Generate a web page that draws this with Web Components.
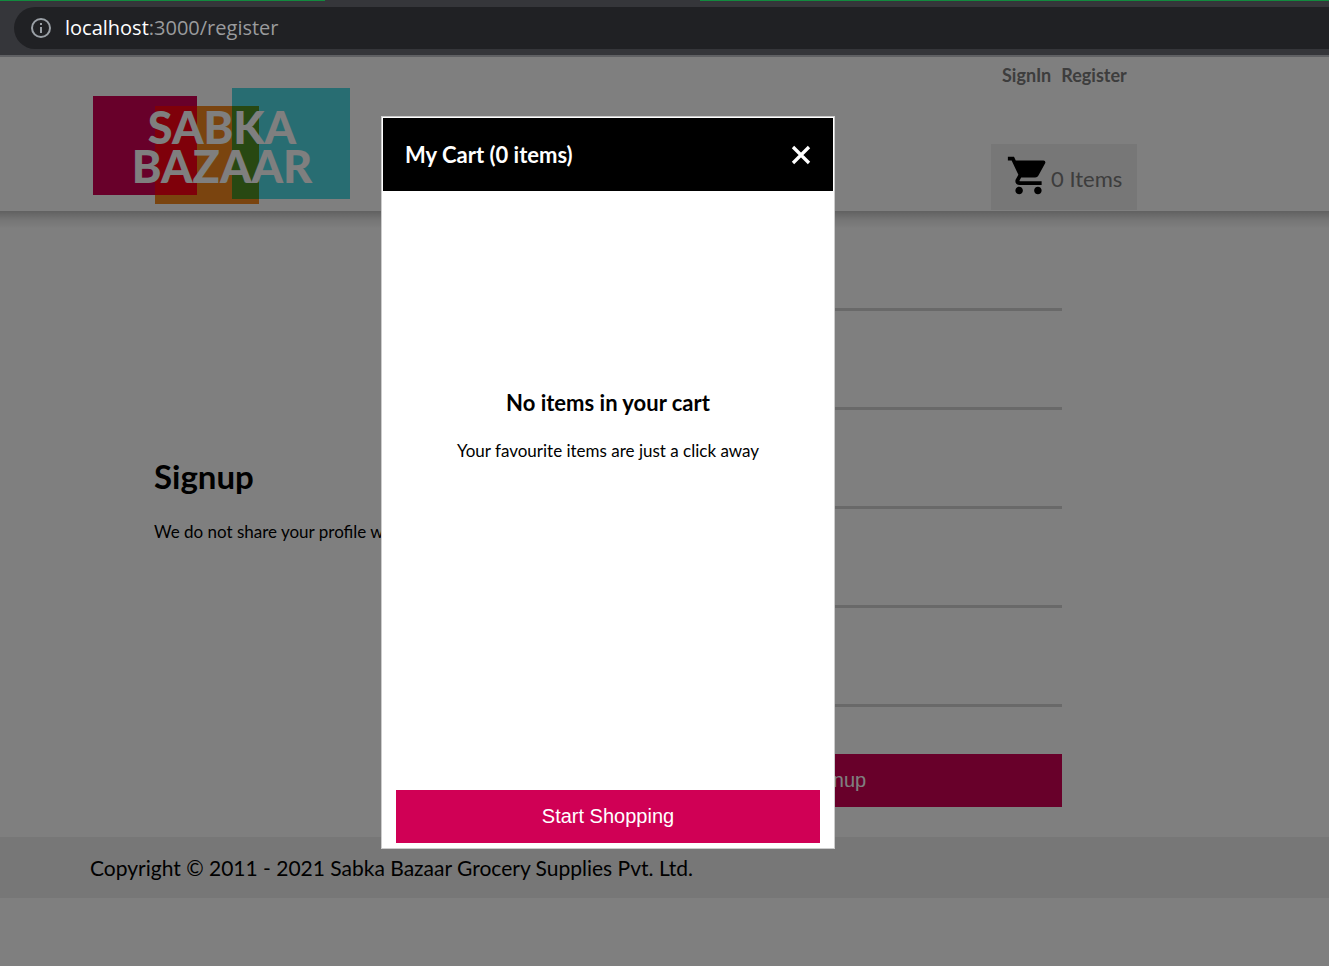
<!DOCTYPE html>
<html lang="en">
<head>
<meta charset="utf-8">
<meta name="viewport" content="width=device-width, initial-scale=1">
<title>Sabka Bazaar - Register</title>
<style>
  html, body { margin: 0; height: 100%; }
  body { font-family: Lato, "Open Sans", sans-serif; color: #000; background: #fff; }
</style>
</head>
<body>
<sabka-app></sabka-app>
<script>
const define = (name, html) => {
  const template = document.createElement('template');
  template.innerHTML = html;
  customElements.define(name, class extends HTMLElement {
    constructor() {
      super();
      this.attachShadow({ mode: 'open' }).append(template.content.cloneNode(true));
    }
  });
};

define('address-bar', `
<style>
  :host { display: block; box-sizing: border-box; height: 57px; padding: 7px 0 0 14px; border-bottom: 2px solid #5f6063;
    background: linear-gradient(90deg, #128a3e 325px, transparent 325px, transparent 700px, #128a3e 700px) 0 0 / 100% 1px no-repeat #35363a; }
  .field { display: flex; align-items: center; box-sizing: border-box; height: 42px; padding-left: 16px; gap: 13px; border-radius: 21px 0 0 21px; background: #202124; }
  p { margin: 0; font: 20px/42px "Open Sans", "Noto Sans", sans-serif; color: #9a9b9d; }
  b { font-weight: 400; color: #fff; }
</style>
<div class="field">
  <svg width="22" height="22" viewBox="0 0 22 22" aria-hidden="true"><circle cx="11" cy="11" r="9" fill="none" stroke="#9aa0a6" stroke-width="2"/><path d="M10 10h2v6h-2zM10 6h2v2h-2z" fill="#9aa0a6"/></svg>
  <p><b>localhost</b>:3000/register</p>
</div>`);

define('brand-logo', `
<style>
  :host { display: grid; width: 257px; height: 116px; }
  svg, div { grid-area: 1 / 1; display: block; }
  div { position: relative; width: 190px; margin: 20px 0 0 34px; font-size: 45px; line-height: 39px; font-weight: 900; text-align: center; color: #fff; }
</style>
<svg width="257" height="116" viewBox="0 0 257 116" aria-hidden="true">
  <path fill="#d00055" d="M0 8h104v99H0z"/>
  <path fill="#f5891f" d="M62 18h104v98H62z"/>
  <path fill="#50dae4" d="M139 0h118v111H139z"/>
  <path fill="#ff0014" d="M62 18h42v89H62z"/>
  <path fill="#509024" d="M139 18h27v93h-27z"/>
</svg>
<div>SABKA BAZAAR</div>`);

define('cart-button', `
<style>
  :host { display: block; }
  button { display: flex; align-items: center; width: 146px; height: 66px; padding: 0 0 0 15px; border: 0; background: #eee; font: 400 22px/28px Lato, sans-serif; color: #7a7a7a; cursor: pointer; white-space: nowrap; }
  svg { flex: none; margin-bottom: 4px; } span { margin-top: 4px; }
</style>
<button type="button">
  <svg width="45" height="45" viewBox="0 0 24 24" aria-hidden="true"><path d="M7 18c-1.100 0-1.990.9-1.990 2S5.900 22 7 22s2-.9 2-2-.9-2-2-2zM1 2v2h2l3.600 7.590-1.350 2.450c-.16.28-.25.61-.25.96 0 1.100.9 2 2 2h12v-2H7.420c-.14 0-.25-.11-.25-.25l.03-.12.9-1.630h7.450c.75 0 1.410-.41 1.750-1.030l3.580-6.490c.08-.14.12-.31.12-.48 0-.55-.45-1-1-1H5.210l-.94-2H1zm16 16c-1.100 0-1.990.9-1.990 2s.89 2 1.990 2 2-.9 2-2-.9-2-2-2z"/></svg>
  <span><slot></slot></span>
</button>`);

define('site-header', `
<style>
  :host { display: block; position: relative; height: 154px; background: #fff; }
  :host::after { content: ""; position: absolute; inset: 100% 0 auto; height: 18px; background: linear-gradient(rgba(0,0,0,.24), rgba(0,0,0,.08) 50%, transparent); }
  .inner { display: flex; justify-content: space-between; box-sizing: border-box; max-width: 1216px; height: 154px; padding: 0 79px 0 93px; }
  brand-logo { margin-top: 31px; }
  .side { display: flex; flex-direction: column; justify-content: space-between; padding-bottom: 1px; }
  nav { display: flex; gap: 10px; padding: 6px 0 0 11px; }
  a { font-size: 18px; line-height: 24px; font-weight: 700; color: #7a7a7a; text-decoration: none; }
</style>
<div class="inner">
  <brand-logo></brand-logo>
  <div class="side">
    <nav><a href="#signin">SignIn</a><a href="#register">Register</a></nav>
    <cart-button>0 Items</cart-button>
  </div>
</div>`);

define('primary-button', `
<style>
  :host { display: block; }
  button { display: block; width: 100%; height: 53px; padding: 0 0 2px; border: 0; background: #d00055; color: #fff; font: 20px/24px "Liberation Sans", Arial, sans-serif; cursor: pointer; }
</style>
<button type="button"><slot></slot></button>`);

define('signup-section', `
<style>
  :host { display: block; }
  main { display: grid; grid-template-columns: 1fr 1fr; box-sizing: border-box; max-width: 1216px; padding: 57px 154px 30px; }
  .intro { padding-top: 184px; }
  h1 { margin: 0; font-size: 33px; line-height: 48px; font-weight: 700; }
  p { margin: 16px 0 0; font-size: 17px; line-height: 32px; font-weight: 400; white-space: nowrap; }
  form { display: grid; gap: 47px; }
  .fields { display: grid; gap: 56px; }
  input { display: block; box-sizing: border-box; width: 100%; height: 43px; padding: 0; border: 0; border-bottom: 3px solid #d3d3d3; border-radius: 0; background: none; font: 20px/24px Lato, sans-serif; outline: 0; }
</style>
<main>
  <div class="intro"><h1>Signup</h1><p>We do not share your profile with anyone</p></div>
  <form>
    <div class="fields">
      <input type="text" aria-label="First Name">
      <input type="text" aria-label="Last Name">
      <input type="email" aria-label="Email">
      <input type="password" aria-label="Password">
      <input type="password" aria-label="Confirm Password">
    </div>
    <primary-button>Signup</primary-button>
  </form>
</main>`);

define('site-footer', `
<style>
  :host { display: block; padding: 15px 90px 14px; background: #eee; }
  p { margin: 0; font-size: 21px; line-height: 32px; font-weight: 400; white-space: nowrap; }
</style>
<footer><p><slot></slot></p></footer>`);

define('cart-dialog', `
<style>
  :host { display: block; box-sizing: border-box; width: 454px; max-width: 100%; }
  section { display: flex; flex-direction: column; box-sizing: border-box; min-height: 733px; padding: 1px; border: 1px solid #ccc; background: #fff; }
  header { display: flex; align-items: center; justify-content: space-between; height: 73px; padding: 0 22px; background: #000; color: #fff; }
  h2 { margin: 0; font-size: 22px; line-height: 32px; font-weight: 700; }
  header button { display: block; padding: 0; border: 0; background: none; cursor: pointer; }
  svg { display: block; }
  .empty { flex: 1; padding-top: 196px; text-align: center; }
  h3 { margin: 0; font-size: 22px; line-height: 32px; font-weight: 700; }
  p { margin: 16px 0 0; font-size: 17px; line-height: 32px; font-weight: 400; }
  .action { padding: 0 13px 4px; }
</style>
<section role="dialog" aria-modal="true" aria-labelledby="title">
  <header><h2 id="title">My Cart (0 items)</h2>
    <button type="button" aria-label="Close"><svg width="20" height="20" viewBox="0 0 20 20" aria-hidden="true"><path d="M2 2l16 16M18 2L2 18" stroke="#fff" stroke-width="3.300"/></svg></button></header>
  <div class="empty"><h3>No items in your cart</h3><p>Your favourite items are just a click away</p></div>
  <div class="action"><primary-button>Start Shopping</primary-button></div>
</section>`);

define('modal-overlay', `
<style>
  :host { position: absolute; inset: 0; background: rgba(0,0,0,.5); }
  .column { display: flex; justify-content: center; max-width: 1216px; padding-top: 59px; }
</style>
<div class="column"><slot></slot></div>`);

define('sabka-app', `
<style>
  :host { display: flex; flex-direction: column; min-height: 100%; }
  .viewport { position: relative; flex: 1; overflow: hidden; }
</style>
<address-bar></address-bar>
<div class="viewport">
  <site-header></site-header>
  <signup-section></signup-section>
  <site-footer>Copyright © 2011 - 2021 Sabka Bazaar Grocery Supplies Pvt. Ltd.</site-footer>
  <modal-overlay><cart-dialog></cart-dialog></modal-overlay>
</div>`);
</script>
</body>
</html>
